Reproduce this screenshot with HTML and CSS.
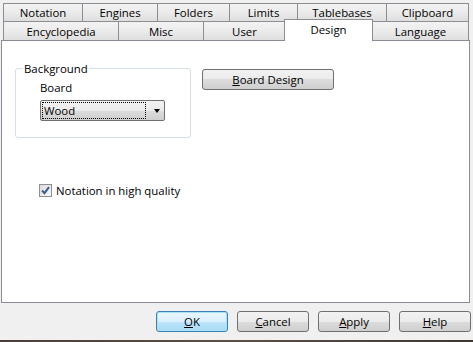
FILE: index.html
```html
<!DOCTYPE html>
<html>
<head>
<meta charset="utf-8">
<link rel="stylesheet" href="styles.css">
</head>
<body>
<div class="dialog">
  <div class="tabs">
    <div class="tabrow row1">
      <div class="tab">Notation</div>
      <div class="tab">Engines</div>
      <div class="tab">Folders</div>
      <div class="tab">Limits</div>
      <div class="tab">Tablebases</div>
      <div class="tab">Clipboard</div>
    </div>
    <div class="tabrow row2">
      <div class="tab">Encyclopedia</div>
      <div class="tab">Misc</div>
      <div class="tab">User</div>
      <div class="tab active">Design</div>
      <div class="tab">Language</div>
    </div>
  </div>
  <div class="panel">
    <div class="top">
      <fieldset class="group">
        <legend>Background</legend>
        <div class="label">Board</div>
        <div class="combo"><span class="value">Wood</span><span class="arrow"></span></div>
      </fieldset>
      <button class="btn board-design"><u>B</u>oard Design</button>
    </div>
    <label class="check">
      <span class="box"><svg width="9" height="9" viewBox="0 0 9 9"><path d="M1 4.5 L3.5 7.2 L8 1.2" fill="none" stroke="#3d5a98" stroke-width="2"/></svg></span>
      <span>Notation in high quality</span>
    </label>
  </div>
  <div class="footer">
    <button class="btn default"><u>O</u>K</button>
    <button class="btn"><u>C</u>ancel</button>
    <button class="btn"><u>A</u>pply</button>
    <button class="btn"><u>H</u>elp</button>
  </div>
  <div class="edge"></div>
</div>
</body>
</html>
```
FILE: styles.css
```css
html, body {
  margin: 0;
  padding: 0;
}
body {
  background: #f0f0f0;
  font-family: "Open Sans", "DejaVu Sans", sans-serif;
  font-size: 11.4px;
  color: #000;
  width: 473px;
  height: 342px;
  overflow: hidden;
}
.dialog {
  display: flex;
  flex-direction: column;
  height: 342px;
}
.tabs {
  padding: 3px 4px 0 3px;
}
.tabrow {
  display: grid;
}
.row1 {
  height: 18px;
  grid-template-columns: 79px 75px 72px 68px 89px 83px;
}
.row2 {
  height: 19px;
  grid-template-columns: 115px 85px 82px 87px 97px;
}
.tab {
  box-sizing: border-box;
  border-top: 1px solid #8c8e94;
  border-left: 1px solid #8c8e94;
  background: linear-gradient(#f3f3f3, #ebebeb 50%, #dedede);
  display: flex;
  align-items: center;
  justify-content: center;
  line-height: 1;
  padding-top: 1px;
}
.tab:last-child {
  border-right: 1px solid #8c8e94;
}
.tab.active {
  background: #fff;
  margin: -2px -1px -1px -1px;
  border-right: 1px solid #8c8e94;
  position: relative;
  z-index: 1;
  align-items: flex-start;
  padding-top: 4px;
}
.panel {
  box-sizing: border-box;
  height: 263px;
  margin: 0 3px 0 1px;
  border: 1px solid #898c95;
  background: #fff;
  padding: 20px 0 0 13px;
}
.top {
  display: flex;
  align-items: flex-start;
}
.group {
  box-sizing: border-box;
  width: 176px;
  height: 77px;
  margin: 0;
  padding: 0 0 0 24px;
  border: 1px solid #d5dfe5;
  border-radius: 3px;
}
.group legend {
  padding: 0 1px;
  margin-left: -17px;
  line-height: 15px;
}
.label {
  margin-top: 4px;
  line-height: 15px;
}
.combo {
  box-sizing: border-box;
  width: 125px;
  height: 21px;
  margin-top: 5px;
  border: 1px solid #707070;
  border-radius: 2px;
  background: linear-gradient(#f2f2f2, #ebebeb 50%, #dddddd 50%, #cfcfcf);
  display: flex;
  align-items: center;
  padding: 1px;
}
.combo .value {
  box-sizing: border-box;
  width: 104px;
  height: 17px;
  border: 1px dotted #000;
  padding-left: 1px;
  line-height: 15px;
}
.combo .arrow {
  margin-left: 8px;
  width: 0;
  height: 0;
  border-left: 3.5px solid transparent;
  border-right: 3.5px solid transparent;
  border-top: 4px solid #000;
}
.btn {
  box-sizing: border-box;
  font-family: inherit;
  font-size: 11.4px;
  color: #000;
  height: 21px;
  border: 1px solid #707070;
  border-radius: 3px;
  background: linear-gradient(#f2f2f2, #ebebeb 50%, #dddddd 50%, #cfcfcf);
  padding: 0;
  line-height: 1;
}
.board-design {
  width: 132px;
  margin: 8px 0 0 11px;
}
.check {
  display: flex;
  align-items: center;
  margin: 45px 0 0 24px;
  line-height: 15px;
}
.box {
  box-sizing: border-box;
  width: 13px;
  height: 13px;
  border: 1px solid #8e8f8f;
  background: linear-gradient(135deg, #dcdcdc, #fafafa);
  display: flex;
  align-items: center;
  justify-content: center;
  margin-right: 4px;
}
.footer {
  display: flex;
  justify-content: flex-end;
  gap: 9px;
  padding: 8px 2px 0 0;
  flex: 1;
}
.footer .btn {
  width: 72px;
}
.btn.default {
  border-color: #3c7fb1;
  background: linear-gradient(#eaf6fd, #d9f0fc 50%, #bee6fd 50%, #a7d9f5);
  box-shadow: inset 0 0 0 1px #a9e3f8;
}
.edge {
  height: 2px;
  background: linear-gradient(90deg, #4a3e36, #5c4f45 50%, #3f3630);
}
```
